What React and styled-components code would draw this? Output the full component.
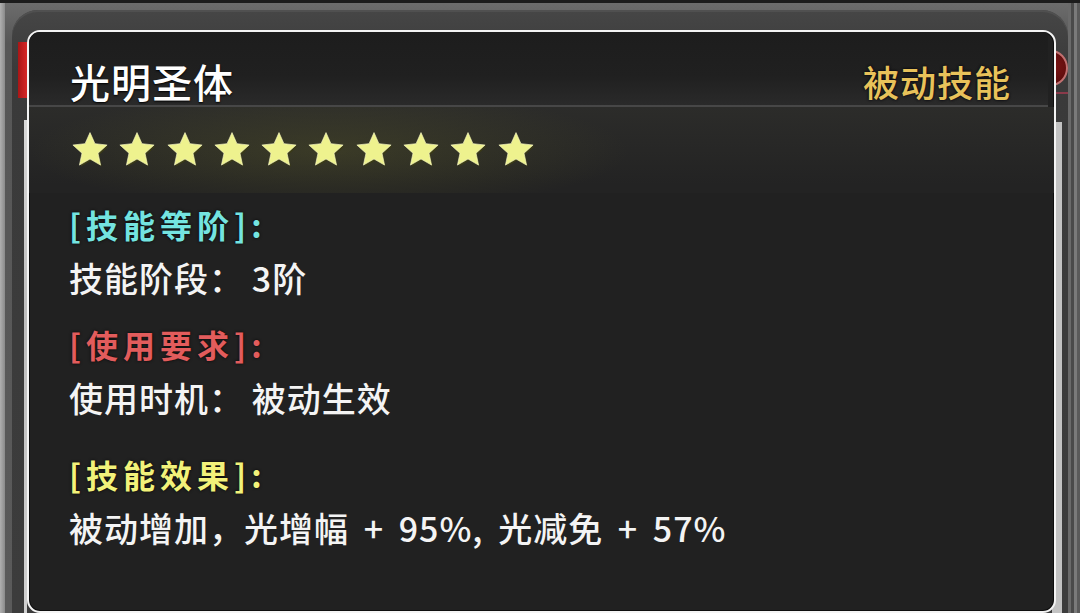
import React from 'react';
import styled, { createGlobalStyle } from 'styled-components';

const GlobalStyle = createGlobalStyle`
  html, body {
    margin: 0;
    padding: 0;
    background: #1a1a1a;
  }
  body {
    font-family: "Noto Sans CJK SC", "Noto Sans", sans-serif;
  }
`;

const CJK = '"Noto Sans CJK SC", "Noto Sans", sans-serif';

/* ---- game window behind the tooltip ---- */

const Scene = styled.div`
  position: relative;
  width: 1080px;
  height: 613px;
  overflow: hidden;
  display: flex;
  flex-direction: column;
  background: #5e5e5e;
  border-top: 3px solid #1c1c1c;
  box-sizing: border-box;
`;

const SceneBody = styled.div`
  flex: 1;
  display: flex;
`;

const EdgeLeft = styled.div`
  width: 5px;
  background: linear-gradient(90deg, #b0b0b0, #8a8a8a);
`;

const EdgeRight = styled.div`
  width: 12px;
  background: linear-gradient(90deg, #6a6a6a 0 3px, #4a4a4a 3px 6px, #7a7a7a 6px 9px, #5a5a5a 9px);
`;

const Frame = styled.div`
  flex: 1;
  display: flex;
  padding: 7px 0 0 7px;
  background: linear-gradient(180deg, #6c6c6c, #575757 40px, #5a5a5a);
`;

const Panel = styled.div`
  flex: 1;
  display: flex;
  border-radius: 26px 26px 0 0;
  background: linear-gradient(180deg, #464646, #3a3a3a 60px, #3c3c3c);
  box-shadow: inset 0 2px 0 #505050;
`;

const LeftRail = styled.div`
  width: 15px;
  display: flex;
  flex-direction: column;
  align-items: flex-end;
  padding-top: 32px;
  gap: 22px;
`;

const RedTab = styled.div`
  width: 9px;
  height: 56px;
  background: linear-gradient(90deg, #a81616, #d62626);
`;

const RailLine = styled.div`
  flex: 1;
  width: 3px;
  background: linear-gradient(180deg, #d8d8d8, #bdbdbd 40%, #d0d0d0);
`;

const Center = styled.div`
  flex: 1;
`;

const RightRail = styled.div`
  width: 16px;
  display: flex;
  flex-direction: column;
  padding-top: 40px;
  gap: 6px;
`;

const RedKnob = styled.div`
  width: 34px;
  height: 36px;
  margin-left: -18px;
  border-radius: 50%;
  background: radial-gradient(circle at 60% 45%, #7a1414, #4e0808);
  border: 2px solid #c07070;
  box-sizing: border-box;
`;

const KnobRule = styled.div`
  height: 2px;
  background: #8a3a4a;
`;

const GreyStrip = styled.div`
  flex: 1;
  margin-top: 22px;
  width: 10px;
  background: #c2c2c2;
`;

/* ---- tooltip card ---- */

const Card = styled.section`
  position: absolute;
  left: 27px;
  top: 27px;
  width: 1029px;
  height: 583px;
  box-sizing: border-box;
  border: 2px solid #f4f4f4;
  border-radius: 13px;
  background: #212121;
  box-shadow: inset 0 0 0 1px #0e0e0e;
  font-family: ${CJK};
  overflow: hidden;
`;

const Header = styled.header`
  display: flex;
  justify-content: space-between;
  align-items: flex-end;
  margin-right: 6px;
  padding: 0 37px 3px 41px;
  height: 75px;
  box-sizing: border-box;
  border-bottom: 2px solid #474747;
  background: linear-gradient(180deg, #1d1d1d, #202020 60%, #2a2a2a);
`;

const Title = styled.h1`
  margin: 0;
  font-size: 40px;
  line-height: 42px;
  font-weight: 500;
  color: #ffffff;
  letter-spacing: 1px;
  text-shadow: 0 1px 2px #000;
`;

const Kind = styled.span`
  font-size: 36px;
  line-height: 42px;
  font-weight: 500;
  color: #e8c25a;
  letter-spacing: 1px;
  text-shadow: 0 0 3px #000, 0 0 2px #1a1a30;
`;

const Glow = styled.div`
  padding: 24px 0 0 42px;
  height: 86px;
  box-sizing: border-box;
  background:
    radial-gradient(ellipse 300px 60px at 300px 44px, rgba(110, 110, 40, 0.28), transparent 100%),
    linear-gradient(180deg, #2c2c2a, #232323 90%);
`;

const StarRow = styled.div`
  display: flex;
  gap: 9.3px;
`;

const Body = styled.main`
  padding: 11px 0 0 40px;
`;

const Label = styled.div`
  font-size: 32px;
  line-height: 40px;
  font-weight: 700;
  letter-spacing: 5px;
  color: ${p => p.color};
  text-shadow: 0 0 3px rgba(0, 0, 0, 0.9);
  margin-top: ${p => p.gap}px;
`;

const Line = styled.div`
  font-size: 34px;
  line-height: 40px;
  font-weight: 500;
  color: #f4f4f4;
  letter-spacing: 1px;
  word-spacing: 6px;
  margin-top: 14px;
  white-space: pre;
`;

const STAR = '18,1.5 22.7,12 34.2,13.3 25.6,21 28,32.3 18,26.5 8,32.3 10.4,21 1.8,13.3 13.3,12';

const Star = () => (
  <svg width="38" height="38" viewBox="0 0 36 36">
    <polygon points={ STAR } fill="#3b3b16" transform="translate(1.2,1.4)"/>
    <polygon points={ STAR } fill="#eef28e" stroke="#f8f8c8" strokeWidth="0.6"/>
  </svg>
);

const sections = [
  { title: '[技能等阶]:', color: '#74e4e0', gap: 0, text: '技能阶段：\u20093阶' },
  { title: '[使用要求]:', color: '#e25c5c', gap: 26, text: '使用时机：\u2009被动生效' },
  { title: '[技能效果]:', color: '#f2f27a', gap: 36, text: '被动增加，光增幅 + 95%, 光减免 + 57%' },
];

const App = () => {
  return (
    <>
      <GlobalStyle />
      <Scene>
        <SceneBody>
          <EdgeLeft />
          <Frame>
            <Panel>
              <LeftRail>
                <RedTab />
                <RailLine />
              </LeftRail>
              <Center />
              <RightRail>
                <RedKnob />
                <KnobRule />
                <GreyStrip />
              </RightRail>
            </Panel>
          </Frame>
          <EdgeRight />
        </SceneBody>

        <Card>
          <Header>
            <Title>光明圣体</Title>
            <Kind>被动技能</Kind>
          </Header>
          <Glow>
            <StarRow>
              { Array.from({ length: 10 }, (_, i) => <Star key={ i }/>) }
            </StarRow>
          </Glow>
          <Body>
            { sections.map(s => (
              <React.Fragment key={ s.title }>
                <Label color={ s.color } gap={ s.gap }>{ s.title }</Label>
                <Line>{ s.text }</Line>
              </React.Fragment>
            )) }
          </Body>
        </Card>
      </Scene>
    </>
  );
};

export default App;
